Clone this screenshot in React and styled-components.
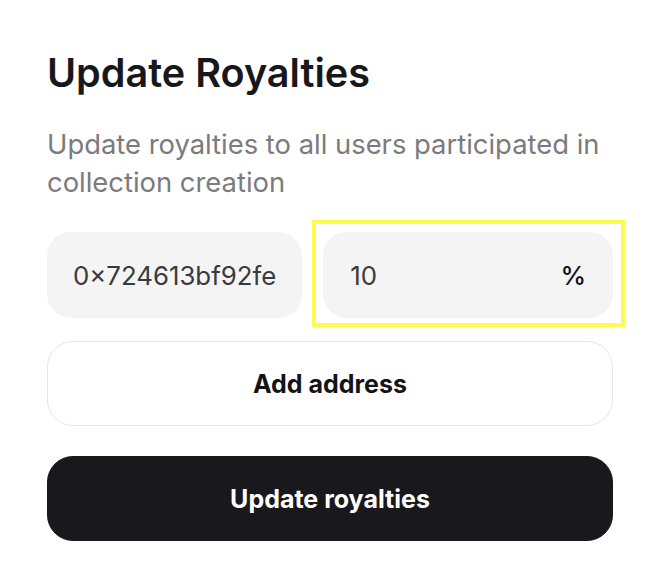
import React from "react";
import styled, { createGlobalStyle } from "styled-components";

const Global = createGlobalStyle`
  html, body { margin: 0; padding: 0; background: #ffffff; }
  body { font-family: Inter, "Noto Sans", sans-serif; -webkit-font-smoothing: antialiased; }
  * { box-sizing: border-box; }
`;

const Panel = styled.div`
  width: 566px;
  margin: 0 0 0 47px;
  padding-top: 49px;
  display: flex;
  flex-direction: column;
`;

const Title = styled.h1`
  margin: 0;
  font-size: 39.6px;
  line-height: 48px;
  font-weight: 600;
  color: #18181b;
`;

const Subtitle = styled.p`
  margin: 28px 0 0;
  font-size: 27.4px;
  line-height: 38px;
  font-weight: 400;
  color: #7b7b7e;
`;

const Row = styled.div`
  display: flex;
  gap: 21px;
  margin-top: 31px;
`;

const Field = styled.div`
  position: relative;
  flex: ${(p) => (p.$grow ? "1 1 auto" : "0 0 auto")};
  height: 86px;
  padding: ${(p) => (p.$grow ? "0 27px 0 27px" : "0 26px")};
  border-radius: 24px;
  background: #f4f4f5;
  display: flex;
  align-items: center;
  justify-content: space-between;
  font-size: 25.8px;
  color: #3a3a3d;

  ${(p) =>
    p.$highlight &&
    `
    &::after {
      content: "";
      position: absolute;
      top: -12px;
      left: -11px;
      right: -12px;
      bottom: -9px;
      border: 4px solid #fbfc4e;
      pointer-events: none;
    }
  `}
`;

const Unit = styled.span`
  color: #111114;
  font-weight: 500;
`;

const Button = styled.button`
  width: 100%;
  height: 85px;
  margin-top: ${(p) => p.$mt}px;
  border-radius: 26px;
  font-family: inherit;
  font-size: 25px;
  font-weight: 700;
  cursor: pointer;
  border: 1px solid ${(p) => (p.$primary ? "#19191d" : "#e6e6e8")};
  background: ${(p) => (p.$primary ? "#19191d" : "#ffffff")};
  color: ${(p) => (p.$primary ? "#ffffff" : "#141416")};
`;

export default function App() {
  return (
    <>
      <Global />
      <Panel>
        <Title>Update Royalties</Title>
        <Subtitle>
          Update royalties to all users participated in collection creation
        </Subtitle>
        <Row>
          <Field>0×724613bf92fe</Field>
          <Field $grow $highlight>
            <span>10</span>
            <Unit>%</Unit>
          </Field>
        </Row>
        <Button $mt={23}>Add address</Button>
        <Button $primary $mt={30}>
          Update royalties
        </Button>
      </Panel>
    </>
  );
}
